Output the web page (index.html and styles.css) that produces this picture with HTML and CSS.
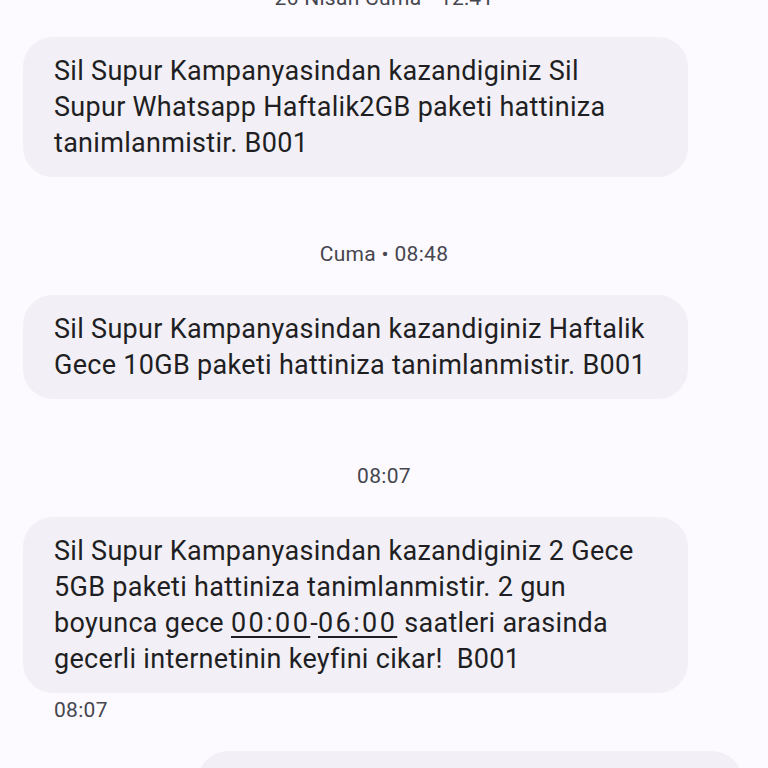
FILE: index.html
```html
<!DOCTYPE html>
<html lang="tr">
<head>
<meta charset="utf-8">
<link rel="stylesheet" href="styles.css">
</head>
<body>
<div class="thread">
  <div class="stamp stamp-top">26 Nisan Cuma • 12:41</div>
  <div class="bubble in">Sil Supur Kampanyasindan kazandiginiz Sil Supur Whatsapp Haftalik2GB paketi hattiniza tanimlanmistir. B001</div>
  <div class="stamp stamp-mid">Cuma • 08:48</div>
  <div class="bubble in">Sil Supur Kampanyasindan kazandiginiz Haftalik Gece 10GB paketi hattiniza tanimlanmistir. B001</div>
  <div class="stamp stamp-mid">08:07</div>
  <div class="bubble in">Sil Supur Kampanyasindan kazandiginiz 2 Gece 5GB paketi hattiniza tanimlanmistir. 2 gun boyunca gece <span class="link">00:00</span>-<span class="link">06:00</span> saatleri arasinda gecerli internetinin keyfini cikar!&nbsp; B001</div>
  <div class="stamp stamp-below">08:07</div>
  <div class="bubble out"></div>
</div>
</body>
</html>
```
FILE: styles.css
```css
html, body {
  margin: 0;
  padding: 0;
  background: #fcfaff;
  height: 768px;
  overflow: hidden;
}
.thread {
  display: flex;
  flex-direction: column;
  align-items: flex-start;
  font-family: Roboto, "Noto Sans", sans-serif;
}
.stamp {
  font-size: 21px;
  line-height: 24px;
  letter-spacing: 0.3px;
  color: #46464f;
}
.stamp-top {
  align-self: center;
  margin-top: -14px;
  margin-bottom: 27px;
}
.stamp-mid {
  align-self: center;
  margin-top: 65px;
  margin-bottom: 29px;
}
.stamp-below {
  margin-left: 54px;
  margin-top: 5px;
  margin-bottom: 29px;
}
.bubble {
  box-sizing: border-box;
  background: #f2eff6;
  border-radius: 30px;
  font-size: 27px;
  line-height: 36px;
  letter-spacing: 0.3px;
  color: #1f1f23;
  padding: 16px 31px;
}
.bubble.in {
  margin-left: 23px;
  width: 665px;
}
.bubble.out {
  align-self: flex-end;
  margin-right: 26px;
  width: 544px;
  min-height: 120px;
}
.link {
  letter-spacing: 2.4px;
  text-decoration: underline;
  text-decoration-thickness: 2px;
  text-underline-offset: 4px;
}
```
